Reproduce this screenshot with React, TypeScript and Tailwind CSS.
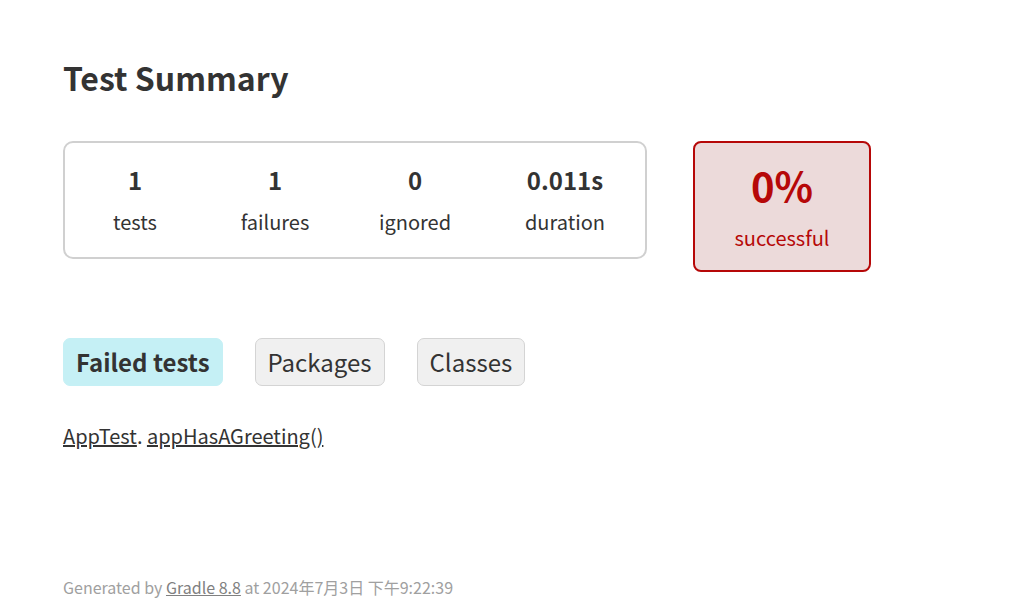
import React from "react";

const stats = [
  { value: "1", label: "tests", width: "w-[140px]" },
  { value: "1", label: "failures", width: "w-[140px]" },
  { value: "0", label: "ignored", width: "w-[140px]" },
  { value: "0.011s", label: "duration", width: "w-[160px]" },
];

const tabs = [
  { name: "Failed tests", selected: true },
  { name: "Packages", selected: false },
  { name: "Classes", selected: false },
];

export default function App() {
  return (
    <div
      className="min-h-[615px] bg-white pl-[63px] pt-[55px] text-[#333333]"
      style={{ fontFamily: '"Noto Sans CJK SC", "Noto Sans", sans-serif' }}
    >
      <h1 className="text-[32px] font-bold leading-[44px]">Test Summary</h1>

      {/* summary boxes */}
      <div className="mt-[42px] flex items-start gap-[46px]">
        <div className="flex w-[584px] rounded-[10px] border-2 border-[#d0d0d0] pt-[22px] pb-[21px]">
          {stats.map((s) => (
            <div key={s.label} className={`${s.width} flex flex-col items-center`}>
              <p className="text-[24px] font-bold leading-[30px]">{s.value}</p>
              <p className="mt-[13px] text-[20px] leading-[28px]">{s.label}</p>
            </div>
          ))}
        </div>

        <div className="flex w-[178px] flex-col items-center rounded-[8px] border-2 border-[#b60808] bg-[#ecdada] pt-[18px] pb-[18px] text-[#b60808]">
          <p className="text-[40px] font-bold leading-[48px]">0%</p>
          <p className="mt-[15px] text-[20px] leading-[28px]">successful</p>
        </div>
      </div>

      {/* tabs */}
      <ul className="mt-[66px] flex gap-[32px]">
        {tabs.map((t) => (
          <li
            key={t.name}
            className={
              t.selected
                ? "rounded-[7px] border border-[#c5f0f5] bg-[#c5f0f5] px-[12px] py-[6px] text-[24px] font-bold leading-[34px]"
                : "rounded-[7px] border border-[#d4d4d4] bg-[#f0f0f0] px-[12px] py-[6px] text-[24px] leading-[34px]"
            }
          >
            {t.name}
          </li>
        ))}
      </ul>

      <p className="mt-[36px] text-[20px] leading-[28px]">
        <a className="underline">AppTest</a>. <a className="underline">appHasAGreeting()</a>
      </p>

      <p className="mt-[125px] text-[16px] leading-[24px] text-[#a0a0a0]">
        Generated by <a className="text-[#808080] underline">Gradle 8.8</a> at 2024年7月3日 下午9:22:39
      </p>
    </div>
  );
}
